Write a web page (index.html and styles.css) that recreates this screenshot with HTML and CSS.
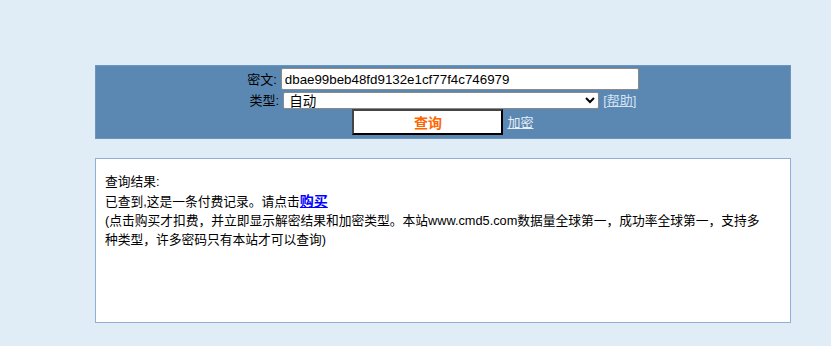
FILE: index.html
```html
<!DOCTYPE html>
<html lang="zh-CN">
<head>
    <meta charset="UTF-8">
    <title>md5解密</title>
    <link rel="stylesheet" href="styles.css">
</head>
<body>
    <div class="wrap">
        <div class="panel">
            <div class="row row-text">
                <span class="label">密文:</span>
                <input type="text" class="txt" value="dbae99beb48fd9132e1cf77f4c746979">
            </div>
            <div class="row row-type">
                <span class="label">类型:</span>
                <select class="sel">
                    <option>自动</option>
                </select>
                <a href="#" class="help">[帮助]</a>
            </div>
            <div class="row row-btn">
                <button class="btn">查询</button>
                <a href="#" class="enc">加密</a>
            </div>
        </div>

        <div class="result">
            <p>查询结果:</p>
            <p>已查到,这是一条付费记录。请点击<a href="#" class="buy">购买</a></p>
            <p>(点击购买才扣费，并立即显示解密结果和加密类型。本站www.cmd5.com数据量全球第一，成功率全球第一，支持多种类型，许多密码只有本站才可以查询)</p>
        </div>
    </div>
</body>
</html>
```

FILE: styles.css
```css
* {
    margin: 0;
    padding: 0;
    box-sizing: border-box;
}

body {
    background: #e1edf6;
    font-family: "Liberation Sans", "Noto Sans CJK SC", sans-serif;
    font-size: 13px;
    color: #000;
}

.wrap {
    width: 696px;
    margin: 65px 0 0 95px;
}

.panel {
    background: #5b88b2;
    border: 1px solid #6d96bc;
    padding: 2px 0 3px;
    height: 74px;
}

.row {
    display: flex;
    justify-content: center;
    align-items: center;
    gap: 4px;
    line-height: 17px;
}

.row-text {
    height: 22px;
}

.row-type {
    height: 17px;
    margin: 2px 0 0;
}

.row-btn {
    height: 26px;
}

.label {
    font-size: 13px;
}

.txt {
    width: 358px;
    height: 22px;
    border: 1px solid #8a8a8a;
    border-radius: 2px;
    padding: 0 3px;
    font-family: "Liberation Sans", Arial, sans-serif;
    font-size: 13.333px;
    color: #000;
    background: #fff;
}

.sel {
    width: 316px;
    height: 17px;
    border: 1px solid #8a8a8a;
    border-radius: 2px;
    font-family: "Liberation Sans", "Noto Sans CJK SC", sans-serif;
    font-size: 13.5px;
    line-height: 15px;
    background: #fff;
    padding: 0 1px;
}

.help,
.enc {
    color: #d4e3f4;
    font-size: 13px;
    text-decoration: underline;
}

.enc {
    color: #e6edf5;
}

.btn {
    width: 151px;
    height: 26px;
    background: #fff;
    border: 2px solid;
    border-color: #444 #000 #000 #444;
    color: #ff6600;
    font-family: "Noto Sans CJK SC", sans-serif;
    font-size: 14px;
    font-weight: bold;
    line-height: 20px;
    cursor: pointer;
}

.result {
    margin-top: 19px;
    height: 165px;
    background: #fff;
    border: 1px solid #8fb0d3;
    padding: 13px 24px 13px 9px;
    font-size: 12.75px;
    line-height: 19px;
}

.buy {
    color: #0000ff;
    font-family: "Noto Sans CJK SC", sans-serif;
    font-size: 14px;
    font-weight: bold;
    line-height: 19px;
}
```
